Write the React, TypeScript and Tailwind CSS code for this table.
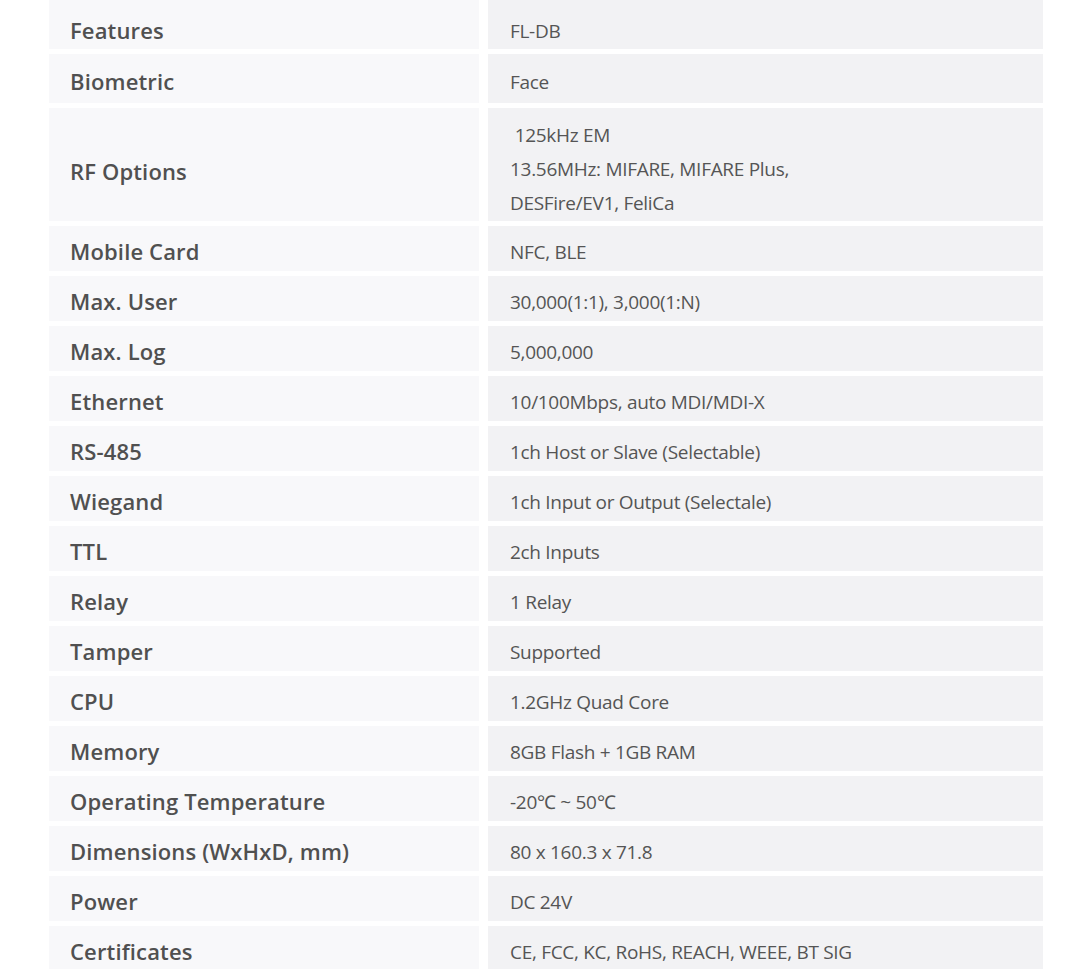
type Spec = { label: string; value: string[]; h: string; lpad?: string; rpad?: string };

const specs: Spec[] = [
  { label: 'Features', value: ['FL-DB'], h: 'h-[49px]', lpad: 'pt-[12px]', rpad: 'pt-[12px]' },
  { label: 'Biometric', value: ['Face'], h: 'h-[49px]' },
  {
    label: 'RF Options',
    value: ['\u00a0125kHz EM', '13.56MHz: MIFARE, MIFARE Plus,', 'DESFire/EV1, FeliCa'],
    h: 'h-[113px]',
    lpad: 'pt-[14px]',
    rpad: 'pt-[8px]',
  },
  { label: 'Mobile Card', value: ['NFC, BLE'], h: 'h-[45px]' },
  { label: 'Max. User', value: ['30,000(1:1), 3,000(1:N)'], h: 'h-[45px]' },
  { label: 'Max. Log', value: ['5,000,000'], h: 'h-[45px]' },
  { label: 'Ethernet', value: ['10/100Mbps, auto MDI/MDI-X'], h: 'h-[45px]' },
  { label: 'RS-485', value: ['1ch Host or Slave (Selectable)'], h: 'h-[45px]' },
  { label: 'Wiegand', value: ['1ch Input or Output (Selectale)'], h: 'h-[45px]' },
  { label: 'TTL', value: ['2ch Inputs'], h: 'h-[45px]' },
  { label: 'Relay', value: ['1 Relay'], h: 'h-[45px]' },
  { label: 'Tamper', value: ['Supported'], h: 'h-[45px]' },
  { label: 'CPU', value: ['1.2GHz Quad Core'], h: 'h-[45px]' },
  { label: 'Memory', value: ['8GB Flash + 1GB RAM'], h: 'h-[45px]' },
  { label: 'Operating Temperature', value: ['-20\u2103 ~ 50\u2103'], h: 'h-[45px]' },
  { label: 'Dimensions (WxHxD, mm)', value: ['80 x 160.3 x 71.8'], h: 'h-[45px]' },
  { label: 'Power', value: ['DC 24V'], h: 'h-[45px]' },
  { label: 'Certificates', value: ['CE, FCC, KC, RoHS, REACH, WEEE, BT SIG'], h: 'h-[45px]' },
];

export default function App() {
  return (
    <div className="min-h-screen bg-white font-['Open_Sans',sans-serif]">
      <div className="ml-[49px] flex w-[994px] flex-col gap-[5px]">
        {specs.map((s) => (
          <div key={s.label} className={`flex gap-[9px] ${s.h}`}>
            <div
              className={`flex w-[430px] shrink-0 items-center bg-[#f8f8fa] pl-[21px] text-[22px] font-semibold tracking-[0.15px] text-[#505050] ${s.lpad ?? 'pt-[6px]'}`}
            >
              {s.label}
            </div>
            <div
              className={`flex flex-1 flex-col justify-center bg-[#f2f2f4] pl-[22px] text-[19px] leading-[34px] tracking-[-0.3px] text-[#555] ${s.rpad ?? 'pt-[6px]'}`}
            >
              {s.value.map((v) => (
                <div key={v}>{v}</div>
              ))}
            </div>
          </div>
        ))}
      </div>
    </div>
  );
}
